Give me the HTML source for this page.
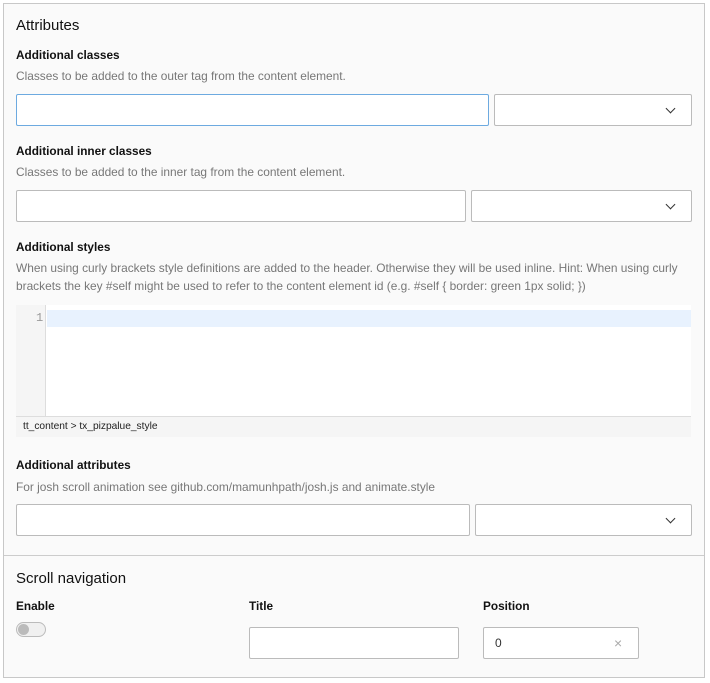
<!DOCTYPE html>
<html><head><style>
*{box-sizing:border-box;margin:0;padding:0}
body{width:710px;height:683px;background:#fff;font-family:"Liberation Sans",sans-serif;position:relative;overflow:hidden}
.box{position:absolute;left:3px;top:3px;width:702px;height:675px;background:#fafafa;border:1px solid #c8c8c8}
.a{position:absolute;white-space:nowrap}
.h{font-size:15px;color:#111}
.l{font-size:11.8px;font-weight:bold;color:#111}
.d{font-size:11.9px;color:#777}
.in{position:absolute;background:#fff;border:1px solid #bbb;border-radius:2px}
.sel::after{content:"";position:absolute;right:17px;top:10px;width:6px;height:6px;border-right:1.5px solid #333;border-bottom:1.5px solid #333;transform:rotate(45deg)}
</style></head><body>
<div class="box"></div>
<div class="a h" style="left:16px;top:17px">Attributes</div>
<div class="a l" style="left:16px;top:48px">Additional classes</div>
<div class="a d" style="left:16px;top:69px">Classes to be added to the outer tag from the content element.</div>
<div class="in" style="left:16px;top:94px;width:473px;height:32px;border-color:#6daae0"></div>
<div class="in sel" style="left:494px;top:94px;width:198px;height:32px"></div>
<div class="a l" style="left:16px;top:144px">Additional inner classes</div>
<div class="a d" style="left:16px;top:165px">Classes to be added to the inner tag from the content element.</div>
<div class="in" style="left:16px;top:190px;width:450px;height:32px"></div>
<div class="in sel" style="left:471px;top:190px;width:221px;height:32px"></div>
<div class="a l" style="left:16px;top:240px">Additional styles</div>
<div class="a d" style="left:16px;top:259px;line-height:18px">When using curly brackets style definitions are added to the header. Otherwise they will be used inline. Hint: When using curly<br>brackets the key #self might be used to refer to the content element id (e.g. #self { border: green 1px solid; })</div>
<div class="a" style="left:16px;top:305px;width:675px;height:132px;background:#fff"></div>
<div class="a" style="left:16px;top:305px;width:30px;height:111px;background:#f5f5f5;border-right:1px solid #ddd"></div>
<div class="a" style="left:47px;top:310px;width:644px;height:17px;background:#e8f2fe"></div>
<div class="a" style="left:36px;top:311px;font-family:'Liberation Mono',monospace;font-size:12px;color:#999">1</div>
<div class="a" style="left:16px;top:416px;width:675px;height:21px;background:#f5f5f5;border-top:1px solid #ddd"></div>
<div class="a" style="left:23px;top:421px;font-size:10.2px;color:#222">tt_content &gt; tx_pizpalue_style</div>
<div class="a l" style="left:16px;top:458px">Additional attributes</div>
<div class="a d" style="left:16px;top:480px">For josh scroll animation see github.com/mamunhpath/josh.js and animate.style</div>
<div class="in" style="left:16px;top:504px;width:454px;height:32px"></div>
<div class="in sel" style="left:475px;top:504px;width:217px;height:32px"></div>
<div class="a" style="left:4px;top:555px;width:700px;height:1px;background:#ccc"></div>
<div class="a h" style="left:16px;top:570px">Scroll navigation</div>
<div class="a l" style="left:16px;top:599px">Enable</div>
<div class="a l" style="left:249px;top:599px">Title</div>
<div class="a l" style="left:483px;top:599px">Position</div>
<div class="a" style="left:16px;top:622px;width:30px;height:15px;border:1px solid #bbb;border-radius:8px;background:#f0f0f0"></div>
<div class="a" style="left:18px;top:624px;width:11px;height:11px;border-radius:50%;background:#bbb"></div>
<div class="in" style="left:249px;top:627px;width:210px;height:32px"></div>
<div class="in" style="left:483px;top:627px;width:156px;height:32px"></div>
<div class="a" style="left:495px;top:636px;font-size:12px;color:#333">0</div>
<div class="a" style="left:614px;top:635px;font-size:14px;color:#aaa">×</div>
</body></html>
